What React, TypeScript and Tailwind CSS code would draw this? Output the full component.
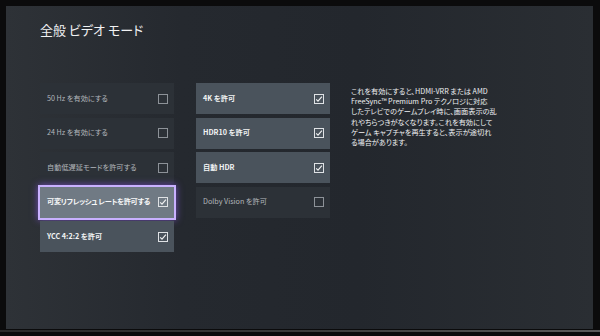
import React from "react";

type Item = { label: string; checked: boolean; focused?: boolean };

const left: Item[] = [
  { label: "50 Hz を有効にする", checked: false },
  { label: "24 Hz を有効にする", checked: false },
  { label: "自動低遅延モードを許可する", checked: false },
  { label: "可変リフレッシュ レートを許可する", checked: true, focused: true },
  { label: "YCC 4:2:2 を許可", checked: true },
];

const right: Item[] = [
  { label: "4K を許可", checked: true },
  { label: "HDR10 を許可", checked: true },
  { label: "自動 HDR", checked: true },
  { label: "Dolby Vision を許可", checked: false },
];

const Box = ({ checked }: { checked: boolean }) => (
  <div
    className={
      "flex h-[10px] w-[10px] shrink-0 items-center justify-center border-[1.5px] " +
      (checked ? "border-[#dfe2e5]" : "border-[#8d9298]")
    }
  >
    {checked && (
      <svg width="8" height="8" viewBox="0 0 8 8" fill="none">
        <path d="M1.2 4.4 L3 6.2 L6.9 1.6" stroke="#f2f3f4" strokeWidth="1.1" />
      </svg>
    )}
  </div>
);

const Row = ({ item }: { item: Item }) => {
  let cls = "bg-[#2c3137] text-[#b3b7bc]";
  if (item.checked) cls = "bg-[#4a535c] text-[#f2f3f4] font-semibold";
  if (item.focused)
    cls =
      "bg-[#707a84] text-[#f7f8f9] font-semibold tracking-[-0.3px] outline-2 outline-[#c9b1ff] shadow-[0_0_7px_2px_rgba(150,95,255,0.65)]";
  return (
    <div className={"flex h-[31px] items-center justify-between pl-[7px] pr-[6px] " + cls}>
      <span className="whitespace-nowrap text-[7.2px] leading-none">{item.label}</span>
      <Box checked={item.checked} />
    </div>
  );
};

export default function App() {
  return (
    <div
      className="h-[336px] w-[600px] overflow-hidden bg-[#0b0b0c] pl-[6px] pt-[6px] [font-feature-settings:'palt']"
      style={{ fontFamily: '"Noto Sans CJK JP", "Noto Sans", sans-serif' }}
    >
      <div className="h-[323px] w-[587px] bg-[linear-gradient(90deg,#2e3237_0%,#25292f_30%,#23272d_60%,#2a2e33_100%)] pl-[34px] pt-[16px]">
        <h1 className="text-[13px] leading-[15px] text-[#f1f2f3]">全般 ビデオ モード</h1>
        <div className="mt-[46px] flex">
          <div className="flex w-[134px] flex-col gap-[3.5px]">
            {left.map((it) => (
              <Row key={it.label} item={it} />
            ))}
          </div>
          <div className="ml-[22px] flex w-[134px] flex-col gap-[3.5px]">
            {right.map((it) => (
              <Row key={it.label} item={it} />
            ))}
          </div>
          <p className="ml-[21px] mt-[3px] w-[170px] text-[7.2px] leading-[10.2px] text-[#eef0f2]">
            これを有効にすると、HDMI-VRR または AMD
            <br />
            FreeSync™ Premium Pro テクノロジに対応
            <br />
            したテレビでのゲームプレイ時に、画面表示の乱
            <br />
            れやちらつきがなくなります。これを有効にして
            <br />
            ゲーム キャプチャを再生すると、表示が途切れ
            <br />
            る場合があります。
          </p>
        </div>
      </div>
      <div className="ml-[-6px] mt-[1px] h-[2px] w-[600px] bg-[linear-gradient(90deg,#2a2a2a,#3a3a3a_50%,#5a5a5a)]" />
    </div>
  );
}
